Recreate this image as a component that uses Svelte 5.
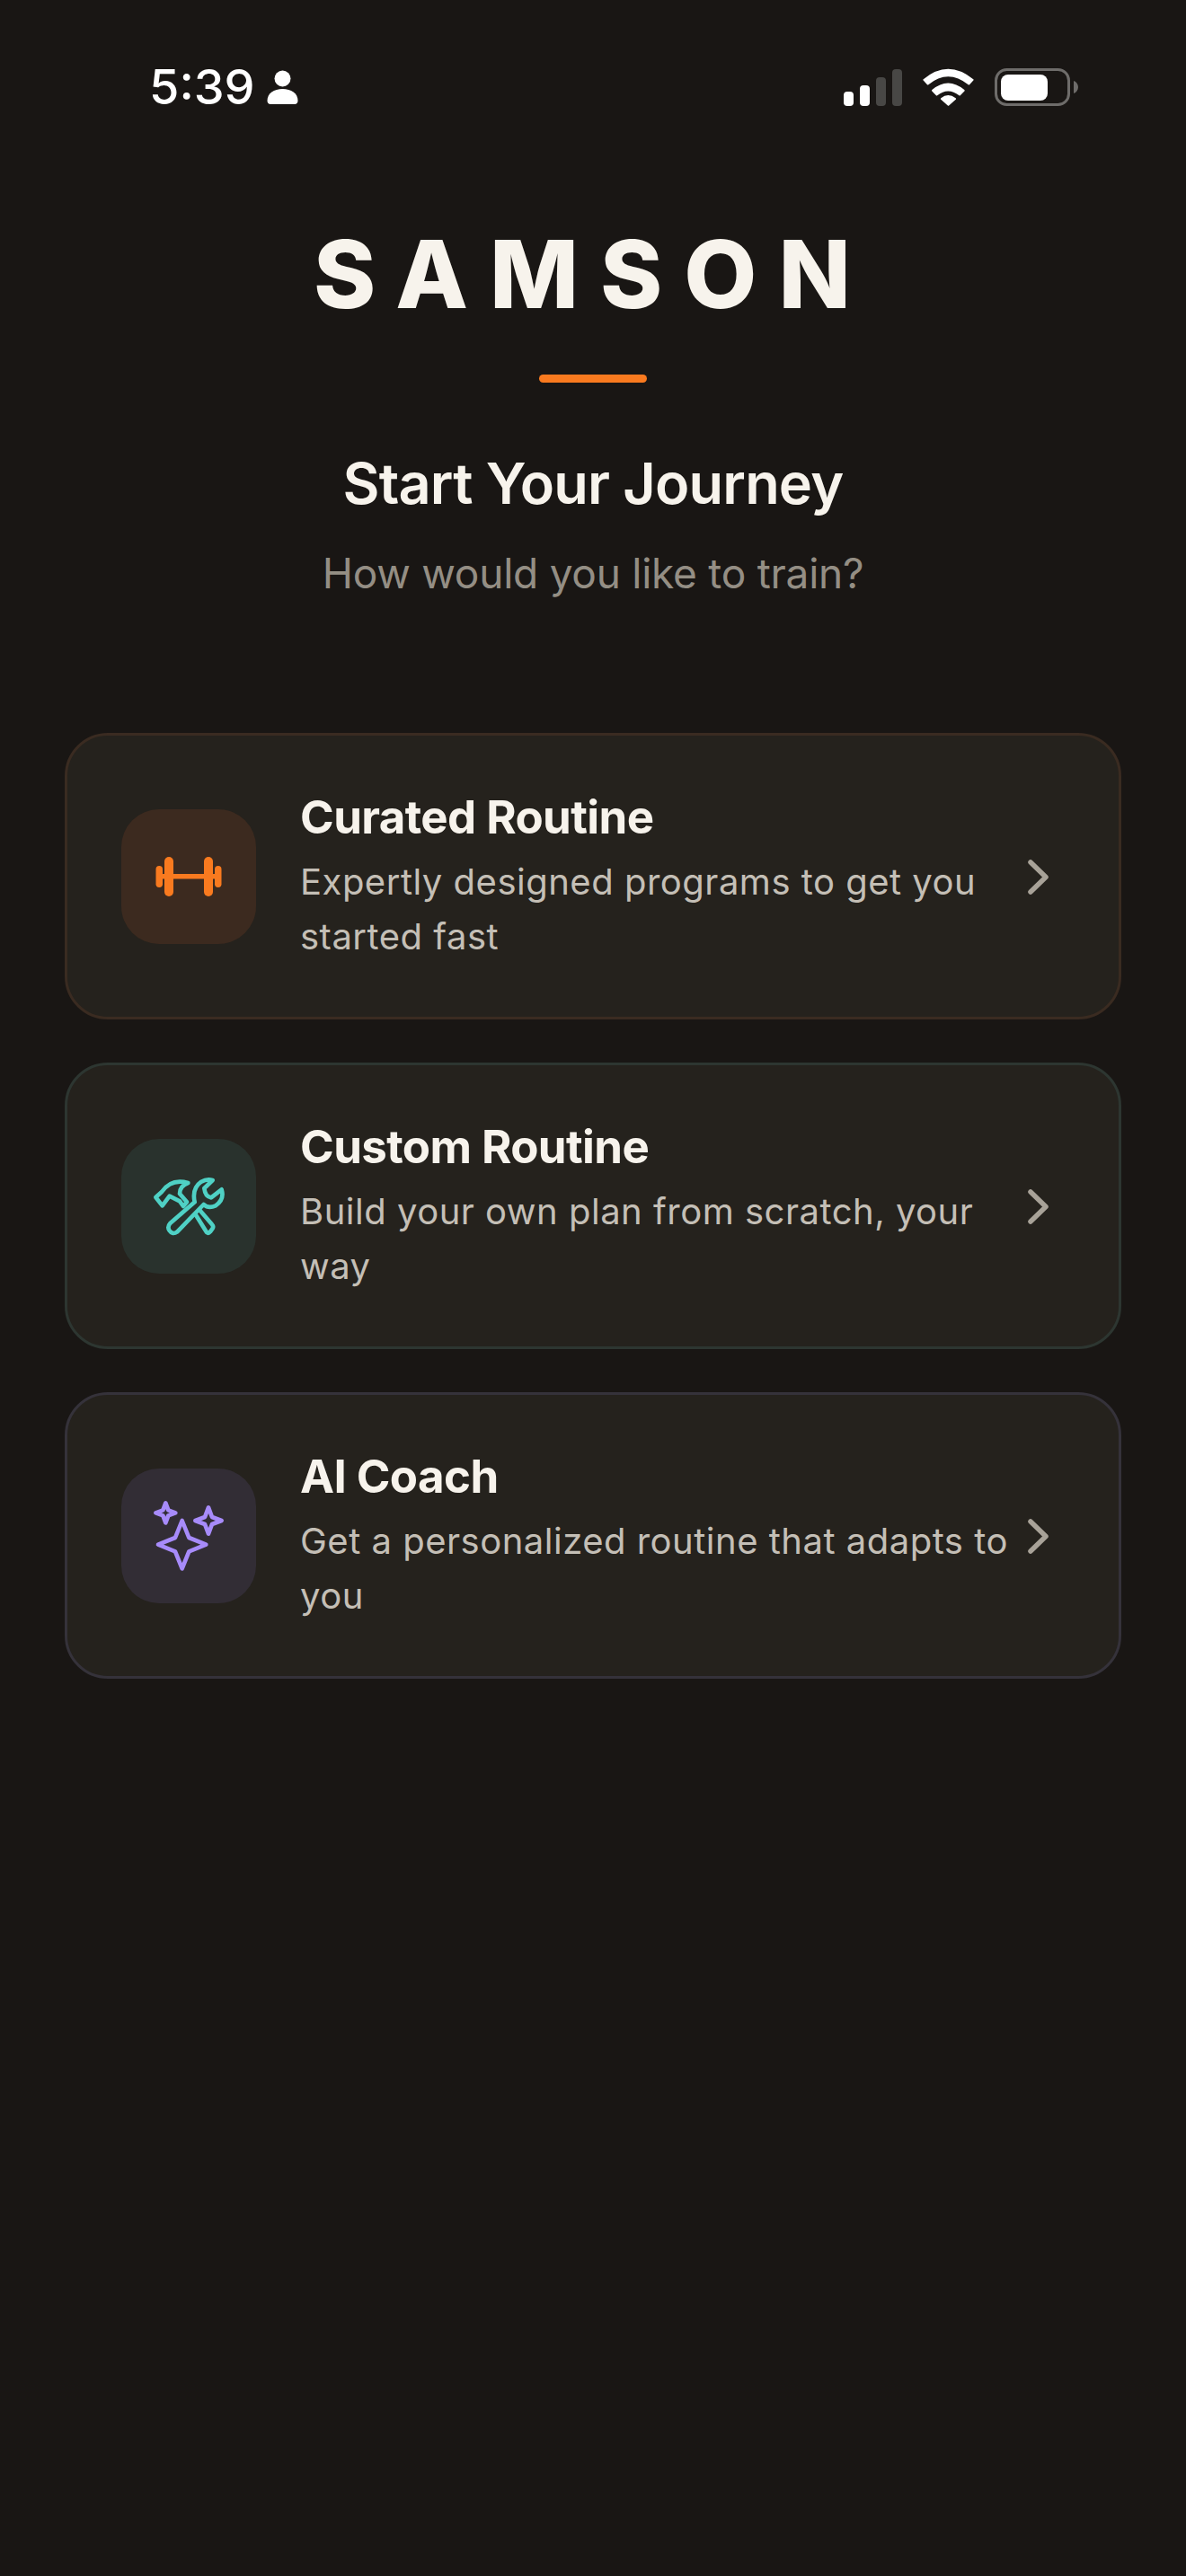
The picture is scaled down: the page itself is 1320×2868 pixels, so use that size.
<script lang="ts">
const options = [
  {
    key: 'curated',
    title: 'Curated Routine',
    desc: 'Expertly designed programs to get you started fast'
  },
  {
    key: 'custom',
    title: 'Custom Routine',
    desc: 'Build your own plan from scratch, your way'
  },
  {
    key: 'coach',
    title: 'AI Coach',
    desc: 'Get a personalized routine that adapts to you'
  }
]
</script>

<div class="screen">
  <div class="status-bar">
    <div class="status-left">
      <span class="time">5:39</span>
      <svg class="person" viewBox="0 0 35 38" aria-hidden="true">
        <circle cx="17.5" cy="9.5" r="9" fill="#fff" />
        <path d="M0.5 34C0.5 26 8 21 17.5 21S34.500 26 34.500 34C34.500 36.500 33 38 31 38H4C2 38 0.5 36.500 0.5 34Z" fill="#fff" />
      </svg>
    </div>
    <div class="status-right">
      <svg class="signal" viewBox="0 0 65 41" aria-hidden="true">
        <rect x="0" y="25" width="11" height="16" rx="4" fill="#fff" />
        <rect x="18" y="18" width="11" height="23" rx="4" fill="#fff" />
        <rect x="36" y="9" width="11" height="32" rx="4" fill="#484745" />
        <rect x="54" y="0" width="11" height="41" rx="4" fill="#484745" />
      </svg>
      <svg class="wifi" viewBox="375 105 172 127" aria-hidden="true">
        <g fill="#fff" stroke="#fff" stroke-width="6" stroke-linejoin="round">
          <path d="M379 144Q460 76 543 144L530 158Q460 102 392 158Z" />
          <path d="M408 180Q460 136 513 180L499 194Q460 164 422 194Z" />
          <path d="M438 208Q460 190 484 208L461 228Z" />
        </g>
      </svg>
      <svg class="battery" viewBox="0 0 93 42" aria-hidden="true">
        <rect x="1.500" y="1.500" width="81" height="39" rx="12" fill="none" stroke="#6e6c6a" stroke-width="3" />
        <rect x="7" y="7" width="52" height="29" rx="8" fill="#fff" />
        <path d="M88 14C91 15 93 18 93 21S91 27 88 28Z" fill="#6e6c6a" />
      </svg>
    </div>
  </div>

  <header class="header">
    <h1 class="logo">SAMSON</h1>
    <div class="accent"></div>
    <h2 class="heading">Start Your Journey</h2>
    <p class="sub">How would you like to train?</p>
  </header>

  <div class="options">
    {#each options as opt}
      <button class="card {opt.key}">
        <div class="icon-box">
          {#if opt.key === 'curated'}
            <svg class="icon" viewBox="0 0 84 84" aria-hidden="true">
              <g fill="#f97a1f">
                <rect x="5.500" y="30" width="7.500" height="24" rx="3.700" />
                <rect x="15" y="20" width="10" height="44" rx="5" />
                <rect x="59" y="20" width="10" height="44" rx="5" />
                <rect x="71" y="30" width="7.500" height="24" rx="3.700" />
                <rect x="12" y="39" width="60" height="5.500" />
              </g>
            </svg>
          {:else if opt.key === 'custom'}
            <svg class="icon" viewBox="144 156 252 252" aria-hidden="true">
              <g fill="none" stroke="#4fd1c5" stroke-width="14" stroke-linejoin="round" stroke-linecap="round">
                <path d="M294 311L330 369Q336 374 342 367L350 356Q354 349 348 343L308 296" />
                <path d="M240 265L206 248L182 280L160 252L180 234Q212 188 268 204Q240 214 240 240L264 268L252 282Z" />
                <path d="M290 268Q280 222 312 200Q330 190 350 195L322 222Q325 250 345 253L380 226Q390 260 360 280Q336 291 320 276L232 367Q216 379 205 362Q198 350 208 339Z" />
              </g>
            </svg>
          {:else}
            <svg class="icon" viewBox="144 147 252 252" aria-hidden="true">
              <g fill="none" stroke="#a78bfa" stroke-width="14" stroke-linejoin="round">
                <path d="M248 222L271 279L328 302L271 325L248 382L225 325L168 302L225 279Z" />
                <path d="M193 163L202 187L226 196L202 205L193 229L184 205L160 196L184 187Z" />
                <path d="M336 178L348 210L380 222L348 234L336 266L324 234L292 222L324 210Z" />
              </g>
            </svg>
          {/if}
        </div>
        <div class="text">
          <span class="title">{opt.title}</span>
          <span class="desc">{opt.desc}</span>
        </div>
        <svg class="chevron" viewBox="0 0 60 60" aria-hidden="true">
          <path d="M22 14L39 30.500L22 47" fill="none" stroke="#a8a298" stroke-width="5.500" stroke-linecap="round" stroke-linejoin="round" />
        </svg>
      </button>
    {/each}
  </div>
</div>

<style>
  :global(body) {
    margin: 0;
    background: #191614;
  }

  .screen {
    height: 2868px;
    background: #191614;
    font-family: Inter, "Noto Sans", sans-serif;
    overflow: hidden;
  }

  .status-bar {
    display: flex;
    justify-content: space-between;
    align-items: center;
    padding: 76px 120px 0 166px;
    height: 42px;
  }

  .status-left {
    display: flex;
    align-items: center;
    gap: 13px;
  }

  .time {
    font-size: 54px;
    font-weight: 500;
    line-height: 42px;
    color: #fff;
  }

  .person {
    width: 35px;
    height: 38px;
  }

  .status-right {
    display: flex;
    align-items: center;
    gap: 23px;
  }

  .signal {
    width: 65px;
    height: 41px;
  }

  .wifi {
    width: 57px;
    height: 42px;
  }

  .battery {
    width: 93px;
    height: 42px;
  }

  .header {
    display: flex;
    flex-direction: column;
    align-items: center;
    padding-top: 127px;
  }

  .logo {
    margin: 0;
    font-size: 105px;
    font-weight: 800;
    line-height: 120px;
    letter-spacing: 24px;
    color: #f7f3ec;
  }

  .accent {
    width: 120px;
    height: 9px;
    border-radius: 5px;
    background: #f97a1f;
    margin-top: 52px;
  }

  .heading {
    margin: 72px 0 0;
    font-size: 63px;
    font-weight: 600;
    line-height: 80px;
    letter-spacing: -0.8px;
    color: #f7f3ec;
  }

  .sub {
    margin: 30px 0 0;
    font-size: 46px;
    font-weight: 400;
    line-height: 60px;
    letter-spacing: -0.25px;
    color: #948e84;
  }

  .options {
    display: flex;
    flex-direction: column;
    gap: 48px;
    margin: 148px 72px 0;
  }

  .card {
    display: flex;
    align-items: center;
    box-sizing: border-box;
    width: 100%;
    height: 319px;
    padding: 0 60px;
    background: #25221d;
    border: 3px solid #3a2b21;
    border-radius: 48px;
    font-family: inherit;
    text-align: left;
  }

  .card.custom {
    border-color: #2d3631;
  }

  .card.coach {
    border-color: #35323a;
  }

  .icon-box {
    flex-shrink: 0;
    display: flex;
    align-items: center;
    justify-content: center;
    width: 150px;
    height: 150px;
    border-radius: 42px;
    margin-right: 49px;
    background: #3c2a1f;
  }

  .custom .icon-box {
    background: #29322d;
  }

  .coach .icon-box {
    background: #322d35;
  }

  .icon {
    width: 84px;
    height: 84px;
  }

  .text {
    flex: 1;
    min-width: 0;
    display: flex;
    flex-direction: column;
    gap: 10px;
  }

  .title {
    font-size: 51px;
    font-weight: 700;
    line-height: 62px;
    letter-spacing: -0.6px;
    color: #f7f3ec;
  }

  .desc {
    font-size: 40px;
    font-weight: 400;
    line-height: 61px;
    letter-spacing: 0.5px;
    color: #c4bfb6;
  }

  .chevron {
    flex-shrink: 0;
    width: 60px;
    height: 60px;
  }
</style>
